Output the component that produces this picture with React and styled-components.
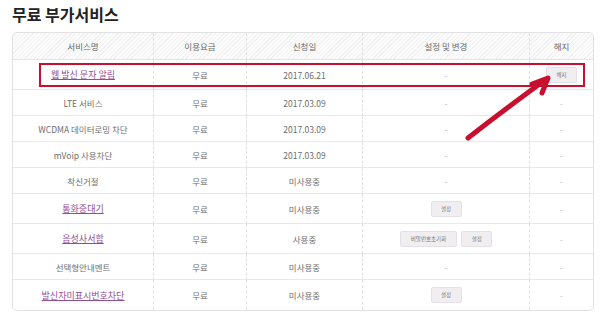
import React from 'react';
import styled, { createGlobalStyle } from 'styled-components';

const GlobalStyle = createGlobalStyle`
  body {
    margin: 0;
    background: #fff;
    font-family: "Noto Sans CJK KR", "Noto Sans", sans-serif;
  }
`;

const Page = styled.div`
  width: 600px;
  height: 329px;
  padding: 0 8px 0 12px;
  box-sizing: border-box;
  overflow: hidden;
`;

const Title = styled.h2`
  margin: 0;
  padding-top: 3px;
  height: 29px;
  font-size: 16px;
  font-weight: 700;
  color: #222;
  line-height: 22px;
`;

const TableWrap = styled.div`
  position: relative;
  width: 580px;
`;

const Table = styled.table`
  width: 580px;
  table-layout: fixed;
  border-collapse: separate;
  border-spacing: 0;
  border: 1px solid #e2e2e2;
  border-radius: 5px;
  overflow: hidden;
  font-size: 8.5px;
  color: #666;
`;

const HeadRow = styled.tr`
  height: 27px;
  background: repeating-linear-gradient(
    135deg,
    #fbfbfb 0,
    #fbfbfb 2px,
    #f2f2f2 2px,
    #f2f2f2 3px
  );
`;

const Th = styled.th`
  font-weight: 400;
  color: #6a6a6a;
  font-size: 8.5px;
  text-align: center;
  padding: 0;
  border-bottom: 1px solid #e4e4e4;
  border-left: 1px dashed #e0e0e0;
  &:first-child {
    border-left: none;
  }
`;

const Row = styled.tr`
  height: ${(p) => (p.$tall ? '30px' : '26px')};
`;

const Td = styled.td`
  text-align: center;
  padding: 0;
  border-left: 1px dashed #e0e0e0;
  border-bottom: 1px solid #e8e8e8;
  &:first-child {
    border-left: none;
  }
  tr:last-child > & {
    border-bottom: none;
  }
`;

const Link = styled.a`
  color: #924d97;
  text-decoration: underline;
  font-size: 9px;
`;

const Plain = styled.span`
  color: #6e6e6e;
  font-size: 8.5px;
`;

const Dash = styled.span`
  color: #aaa;
  font-size: 8px;
`;

const Buttons = styled.div`
  display: flex;
  justify-content: center;
  gap: 4px;
`;

const SmallButton = styled.button`
  height: 16px;
  min-width: 31px;
  padding: 0 ${(p) => (p.$wide ? '10px' : '6px')};
  border: 1px solid #e3e1e5;
  background: #f0eef1;
  border-radius: 2px;
  font-family: inherit;
  font-size: 5.5px;
  color: #777;
  line-height: 14px;
`;

const Highlight = styled.div`
  position: absolute;
  left: 27px;
  top: 31px;
  width: 546px;
  height: 24px;
  border: 2px solid #c8102e;
  box-sizing: border-box;
  pointer-events: none;
`;

const Arrow = styled.svg`
  position: absolute;
  left: 0;
  top: 0;
  pointer-events: none;
`;

const headers = ['서비스명', '이용요금', '신청일', '설정 및 변경', '해지'];
const widths = [140, 93, 116, 167, 64];

const rows = [
  { name: '웹 발신 문자 알림', link: true, date: '2017.06.21', settings: [], cancel: true, tall: true },
  { name: 'LTE 서비스', date: '2017.03.09', settings: [] },
  { name: 'WCDMA 데이터로밍 차단', date: '2017.03.09', settings: [] },
  { name: 'mVoip 사용차단', date: '2017.03.09', settings: [] },
  { name: '착신거절', date: '미사용중', settings: [] },
  { name: '통화중대기', link: true, date: '미사용중', settings: ['설정'], tall: true },
  { name: '음성사서함', link: true, date: '사용중', settings: ['비밀번호초기화', '설정'], tall: true },
  { name: '선택형안내멘트', date: '미사용중', settings: [] },
  { name: '발신자미표시번호차단', link: true, date: '미사용중', settings: ['설정'], tall: true },
];

const App = () => {
  return (
    <Page>
      <GlobalStyle />
      <Title>무료 부가서비스</Title>
      <TableWrap>
        <Table>
          <colgroup>
            {widths.map((w, i) => (
              <col key={i} style={{ width: w }} />
            ))}
          </colgroup>
          <thead>
            <HeadRow>
              {headers.map((h) => (
                <Th key={h}>{h}</Th>
              ))}
            </HeadRow>
          </thead>
          <tbody>
            {rows.map((r) => (
              <Row key={r.name} $tall={r.tall}>
                <Td>{r.link ? <Link>{r.name}</Link> : <Plain>{r.name}</Plain>}</Td>
                <Td>
                  <Plain>무료</Plain>
                </Td>
                <Td>
                  <Plain>{r.date}</Plain>
                </Td>
                <Td>
                  {r.settings.length ? (
                    <Buttons>
                      {r.settings.map((s) => (
                        <SmallButton key={s} $wide={s.length > 2}>
                          {s}
                        </SmallButton>
                      ))}
                    </Buttons>
                  ) : (
                    <Dash>-</Dash>
                  )}
                </Td>
                <Td>{r.cancel ? <SmallButton>해지</SmallButton> : <Dash>-</Dash>}</Td>
              </Row>
            ))}
          </tbody>
        </Table>
        <Highlight />
        <Arrow width="580" height="290" viewBox="0 0 580 290">
          <g
            fill="none"
            stroke="#c8102e"
            strokeWidth="5"
            strokeLinecap="round"
            strokeLinejoin="round"
          >
            <path d="M456 106 Q492 78 533 48" />
            <path d="M520 52 L536 46 L530 61" />
          </g>
        </Arrow>
      </TableWrap>
    </Page>
  );
};

export default App;
